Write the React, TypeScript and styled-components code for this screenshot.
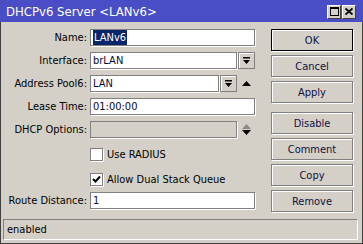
import React from "react";
import styled, { createGlobalStyle } from "styled-components";

const GlobalStyle = createGlobalStyle`
  html, body { margin: 0; padding: 0; background: #d4d0c8; }
  body { font-family: "DejaVu Sans Condensed", "DejaVu Sans", sans-serif; font-stretch: condensed; font-size: 11px; color: #000; }
  * { box-sizing: border-box; }
`;

const Window = styled.div`
  width: 363px;
  height: 244px;
  background: #d4d0c8;
  border-left: 1px solid #404040;
  border-right: 1px solid #404040;
  border-bottom: 1px solid #404040;
  display: flex;
  flex-direction: column;
`;

const TitleBar = styled.div`
  height: 22px;
  background: #4a4ec6;
  color: #fff;
  display: flex;
  align-items: center;
  margin: 0 -1px;
  padding: 0 7px 0 6px;
  font-size: 13px;
`;

const TitleText = styled.div`
  flex: 1;
`;

const TitleButtons = styled.div`
  display: flex;
  gap: 1px;
  margin-top: 1px;
`;

const TitleButton = styled.div`
  width: 14px;
  height: 14px;
  background: #d4d0c8;
  border-top: 1px solid #fff;
  border-left: 1px solid #fff;
  border-right: 1px solid #404040;
  border-bottom: 1px solid #404040;
  display: flex;
  align-items: center;
  justify-content: center;
`;

const Body = styled.div`
  flex: 1;
  display: flex;
`;

const Form = styled.div`
  width: 270px;
  padding-top: 7px;
  display: flex;
  flex-direction: column;
`;

const Row = styled.div<{ $mt?: number }>`
  display: flex;
  align-items: center;
  height: 17px;
  margin-top: ${(p) => p.$mt ?? 0}px;
`;

const Label = styled.div`
  width: 86px;
  text-align: right;
  margin-right: 3px;
  white-space: nowrap;
`;

const Field = styled.div`
  width: 165px;
  height: 17px;
  display: flex;
  align-items: center;
`;

const Input = styled.div<{ $w?: number; $disabled?: boolean }>`
  width: ${(p) => (p.$w ? `${p.$w}px` : "100%")};
  height: 17px;
  background: ${(p) => (p.$disabled ? "#d4d0c8" : "#fff")};
  border: 1px solid #808080;
  box-shadow: 1px 1px 0 #fff;
  display: flex;
  align-items: center;
  padding-left: 2px;
  white-space: nowrap;
  color: #0a0a30;
`;

const Selected = styled.span`
  background: #0a246a;
  color: #fff;
  padding: 1px 1px;
`;

const DropButton = styled.div`
  width: 17px;
  height: 17px;
  margin-left: 1px;
  background: #d4d0c8;
  border: 1px solid #808080;
  box-shadow: inset 1px 1px 0 #fff;
  display: flex;
  align-items: center;
  justify-content: center;
`;

const ArrowSlot = styled.div`
  width: 18px;
  height: 17px;
  display: flex;
  flex-direction: column;
  align-items: center;
  justify-content: center;
  gap: 1px;
`;

const CheckRow = styled.div<{ $mt: number }>`
  display: flex;
  align-items: center;
  height: 13px;
  margin-top: ${(p) => p.$mt}px;
  padding-left: 89px;
`;

const CheckBox = styled.div`
  width: 13px;
  height: 13px;
  background: #fff;
  border: 1px solid #808080;
  box-shadow: 1px 1px 0 #fff;
  display: flex;
  align-items: center;
  justify-content: center;
  margin-right: 4px;
`;

const Buttons = styled.div`
  width: 82px;
  padding-top: 7px;
  display: flex;
  flex-direction: column;
`;

const Button = styled.div<{ $default?: boolean; $mt?: number }>`
  height: 22px;
  margin-top: ${(p) => p.$mt ?? 0}px;
  margin-bottom: 4px;
  background: #d4d0c8;
  border: 1px solid ${(p) => (p.$default ? "#000" : "#808080")};
  box-shadow: 1px 1px 0 #fff, inset 1px 1px 0 #fff;
  display: flex;
  align-items: center;
  justify-content: center;
  color: #101040;
`;

const StatusBar = styled.div`
  height: 21px;
  margin: 0 4px 3px 2px;
  border-top: 1px solid #808080;
  border-left: 1px solid #808080;
  border-right: 1px solid #fff;
  border-bottom: 1px solid #fff;
  display: flex;
  align-items: center;
  padding-left: 3px;
`;

const DropIcon = () => (
  <svg width="9" height="8" viewBox="0 0 9 8">
    <rect x="1" y="0" width="7" height="1.5" fill="#000" />
    <polygon points="1,3 8,3 4.5,7" fill="#000" />
  </svg>
);

const UpTri = ({ color = "#000" }: { color?: string }) => (
  <svg width="9" height="5" viewBox="0 0 9 5">
    <polygon points="0,5 9,5 4.5,0" fill={color} />
  </svg>
);

const DownTri = ({ color = "#000" }: { color?: string }) => (
  <svg width="9" height="5" viewBox="0 0 9 5">
    <polygon points="0,0 9,0 4.5,5" fill={color} />
  </svg>
);

export default function App() {
  return (
    <>
      <GlobalStyle />
      <Window>
        <TitleBar>
          <TitleText>DHCPv6 Server &lt;LANv6&gt;</TitleText>
          <TitleButtons>
            <TitleButton>
              <svg width="9" height="9" viewBox="0 0 9 9">
                <rect x="0.5" y="0.5" width="8" height="8" fill="none" stroke="#000" />
                <rect x="0" y="0" width="9" height="2" fill="#000" />
              </svg>
            </TitleButton>
            <TitleButton>
              <svg width="8" height="7" viewBox="0 0 8 7">
                <path d="M0.5 0.5 L7.5 6.5 M7.5 0.5 L0.5 6.5" stroke="#000" strokeWidth="1.8" />
              </svg>
            </TitleButton>
          </TitleButtons>
        </TitleBar>
        <Body>
          <Form>
            <Row>
              <Label>Name:</Label>
              <Field>
                <Input>
                  <Selected>LANv6</Selected>
                </Input>
              </Field>
            </Row>
            <Row $mt={6}>
              <Label>Interface:</Label>
              <Field>
                <Input $w={147}>brLAN</Input>
                <DropButton>
                  <DropIcon />
                </DropButton>
              </Field>
            </Row>
            <Row $mt={6}>
              <Label>Address Pool6:</Label>
              <Field>
                <Input $w={131}>LAN</Input>
                <DropButton>
                  <DropIcon />
                </DropButton>
                <ArrowSlot>
                  <UpTri />
                </ArrowSlot>
              </Field>
            </Row>
            <Row $mt={6}>
              <Label>Lease Time:</Label>
              <Field>
                <Input>01:00:00</Input>
              </Field>
            </Row>
            <Row $mt={6}>
              <Label>DHCP Options:</Label>
              <Field>
                <Input $w={147} $disabled />
                <ArrowSlot>
                  <UpTri color="#8a8a8a" />
                  <DownTri />
                </ArrowSlot>
              </Field>
            </Row>
            <CheckRow $mt={10}>
              <CheckBox />
              Use RADIUS
            </CheckRow>
            <CheckRow $mt={12}>
              <CheckBox>
                <svg width="9" height="9" viewBox="0 0 9 9">
                  <path d="M1 4 L3.5 6.5 L8 1.5" fill="none" stroke="#000" strokeWidth="2" />
                </svg>
              </CheckBox>
              Allow Dual Stack Queue
            </CheckRow>
            <Row $mt={6}>
              <Label>Route Distance:</Label>
              <Field>
                <Input>1</Input>
              </Field>
            </Row>
          </Form>
          <Buttons>
            <Button $default>OK</Button>
            <Button>Cancel</Button>
            <Button>Apply</Button>
            <Button $mt={5}>Disable</Button>
            <Button>Comment</Button>
            <Button>Copy</Button>
            <Button>Remove</Button>
          </Buttons>
        </Body>
        <StatusBar>enabled</StatusBar>
      </Window>
    </>
  );
}
